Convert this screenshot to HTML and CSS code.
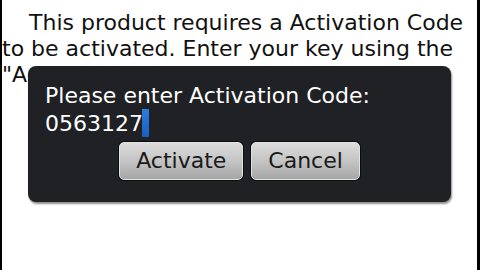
FILE: index.html
```html
<!DOCTYPE html>
<html lang="en">
<head>
    <meta charset="UTF-8" />
    <title>Activation</title>
    <link rel="stylesheet" href="styles.css">
</head>
<body>
    <!-- 본문 -->
    <div class="screen">
        <p class="notice">
            This product requires a Activation Code to be activated. Enter your key using the "Activate" button.
        </p>

        <!-- 활성화 대화상자 -->
        <div class="dialog">
            <div class="dialog-text">
                Please enter Activation Code:<br />
                0563127<span class="cursor"></span>
            </div>
            <div class="dialog-buttons">
                <button type="button" class="btn">Activate</button>
                <button type="button" class="btn">Cancel</button>
            </div>
        </div>
    </div>
</body>
</html>
```

FILE: styles.css
```css
html, body {
    margin:0;
    padding:0;
    background:#fff;
}
.screen {
    position:relative;
    width:475px;
    height:270px;
    border-left:2px solid #000;
    border-right:3px solid #000;
    background:#fff;
    font-family:"DejaVu Sans", sans-serif;
    font-size:22px;
    line-height:26px;
    color:#111;
    overflow:hidden;
}
.notice {
    margin:0;
    padding-top:10px;
    text-indent:27px;
}
.dialog {
    position:absolute;
    left:26px;
    top:66px;
    width:389px;
    padding:17px 17px 22px;
    background:#1f2124;
    border-radius:8px;
    box-shadow:1px 2px 2px rgba(0,0,0,0.45);
    color:#fff;
}
.dialog-text {
    white-space:nowrap;
}
.cursor {
    display:inline-block;
    width:7px;
    height:28px;
    vertical-align:-6px;
    margin-left:-1px;
    background:linear-gradient(#2a7fe0, #1660bf);
}
.dialog-buttons {
    display:flex;
    justify-content:center;
    gap:8px;
    margin-top:5px;
}
.btn {
    height:38px;
    padding:0 16px;
    border:1px solid #e2e2e2;
    border-radius:5px;
    background:linear-gradient(#dcdcdc, #c4c4c4 50%, #a6a6a6);
    box-shadow:0 0 0 1px #0c0d0e;
    font-family:"DejaVu Sans", sans-serif;
    font-size:22px;
    line-height:36px;
    color:#1a1a1a;
}
```
